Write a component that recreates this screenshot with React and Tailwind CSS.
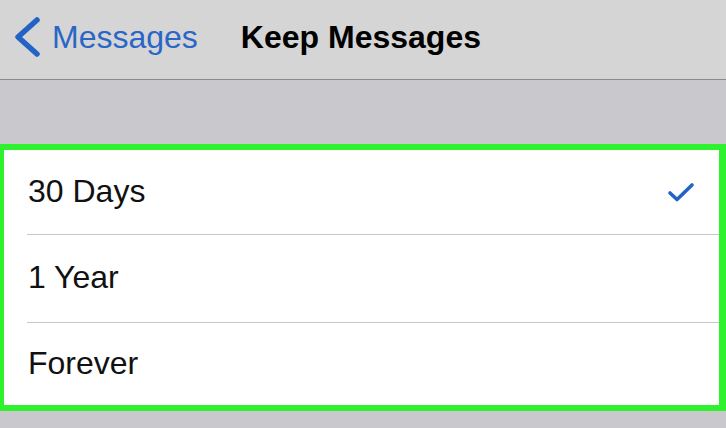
const options = [
  { label: "30 Days", selected: true, height: "h-[84px]" },
  { label: "1 Year", selected: false, height: "h-[87px]" },
  { label: "Forever", selected: false, height: "h-[82px]" },
];

function ChevronLeft() {
  return (
    <svg width="30" height="44" viewBox="0 0 30 44" fill="none">
      <path d="M25 5 L6 22 L25 39" stroke="#2463c6" strokeWidth="5.5" strokeLinecap="round" strokeLinejoin="round" />
    </svg>
  );
}

function Check() {
  return (
    <svg width="28" height="22" viewBox="0 0 28 22" fill="none">
      <path d="M3 12 L10 18.5 L25 4" stroke="#2463c6" strokeWidth="3.6" strokeLinecap="round" strokeLinejoin="round" />
    </svg>
  );
}

export default function App() {
  return (
    <div
      className="flex h-[428px] w-[726px] flex-col overflow-hidden bg-[#c8c8cd]"
      style={{ fontFamily: '"Liberation Sans", Arial, sans-serif' }}
    >
      <header className="flex h-[80px] shrink-0 items-center border-b border-[#8a8a8a] bg-[#d5d5d5] pb-[6px]">
        <div className="ml-[12px] flex items-center text-[#2966c7]">
          <ChevronLeft />
          <span className="ml-[10px] text-[32px] leading-none">Messages</span>
        </div>
        <h1 className="ml-[43px] text-[32px] font-bold leading-none text-black">Keep Messages</h1>
      </header>

      <div className="h-[64px] shrink-0" />

      <section className="shrink-0 border-b-[6px] border-l-[4px] border-r-[7px] border-t-[6px] border-[#2ff22f] bg-white">
        {options.map((option, index) => (
          <div key={option.label}>
            {index > 0 && <div className="ml-[23px] h-px bg-[#c6c6c6]" />}
            <div className={`flex items-center justify-between pl-[24px] pr-[24px] ${option.height}`}>
              <span className="pb-[3px] text-[32px] leading-none text-[#111]">{option.label}</span>
              {option.selected && <Check />}
            </div>
          </div>
        ))}
      </section>
    </div>
  );
}
